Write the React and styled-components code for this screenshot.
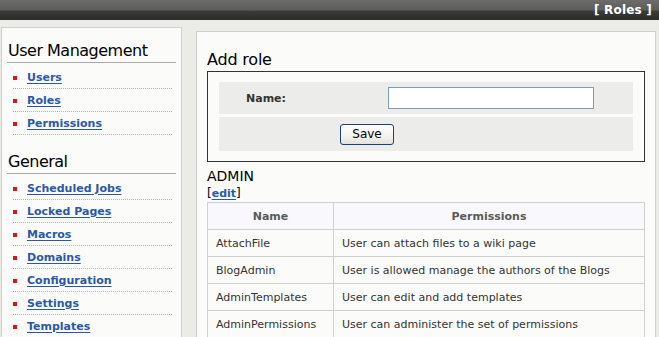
import React from 'react';
import styled, { createGlobalStyle } from 'styled-components';

const GlobalStyle = createGlobalStyle`
  html, body {
    margin: 0;
    padding: 0;
    background: #ebece8;
    font-family: "DejaVu Sans", Verdana, sans-serif;
    overflow: hidden;
  }
  * { box-sizing: border-box; }
`;

const userLinks = ['Users', 'Roles', 'Permissions'];
const generalLinks = [
  'Scheduled Jobs',
  'Locked Pages',
  'Macros',
  'Domains',
  'Configuration',
  'Settings',
  'Templates',
];

const permissions = [
  { name: 'AttachFile', desc: 'User can attach files to a wiki page' },
  { name: 'BlogAdmin', desc: 'User is allowed manage the authors of the Blogs' },
  { name: 'AdminTemplates', desc: 'User can edit and add templates' },
  { name: 'AdminPermissions', desc: 'User can administer the set of permissions' },
];

export default function App() {
  return (
    <>
      <GlobalStyle />
      <TopBar>
        <PageTitle>[ Roles ]</PageTitle>
      </TopBar>
      <Layout>
        <Sidebar>
          <SideHeading>User Management</SideHeading>
          <NavList>
            {userLinks.map((l) => (
              <NavItem key={l}>
                <NavLink href="#">{l}</NavLink>
              </NavItem>
            ))}
          </NavList>
          <SideHeading $spaced>General</SideHeading>
          <NavList>
            {generalLinks.map((l) => (
              <NavItem key={l}>
                <NavLink href="#">{l}</NavLink>
              </NavItem>
            ))}
          </NavList>
        </Sidebar>
        <Main>
          <MainHeading>Add role</MainHeading>
          <FormBox>
            <FormRow>
              <Label>Name:</Label>
              <NameInput type="text" />
            </FormRow>
            <FormRow $button>
              <SaveButton>Save</SaveButton>
            </FormRow>
          </FormBox>
          <RoleTitle>ADMIN</RoleTitle>
          <EditLine>
            [<NavLink href="#">edit</NavLink>]
          </EditLine>
          <Table>
            <thead>
              <tr>
                <Th style={{ width: 126 }}>Name</Th>
                <Th>Permissions</Th>
              </tr>
            </thead>
            <tbody>
              {permissions.map((p) => (
                <tr key={p.name}>
                  <Td>{p.name}</Td>
                  <Td>{p.desc}</Td>
                </tr>
              ))}
            </tbody>
          </Table>
        </Main>
      </Layout>
    </>
  );
}

const TopBar = styled.header`
  height: 20px;
  display: flex;
  justify-content: flex-end;
  align-items: center;
  padding-right: 7px;
  background: linear-gradient(#6c6d6a 0%, #5c5d5a 50%, #3b3b3b 55%, #2b2b2b 100%);
`;

const PageTitle = styled.span`
  color: #fff;
  font-weight: bold;
  font-size: 12px;
  letter-spacing: 0.2px;
`;

const Layout = styled.div`
  display: flex;
  align-items: flex-start;
  gap: 14px;
  height: 317px;
  overflow: hidden;
  padding: 7px 0 0 1px;
`;

const Sidebar = styled.nav`
  width: 181px;
  flex-shrink: 0;
  background: #fbfcf9;
  border: 1px solid #cfd0cc;
  padding: 12px 5px 20px 5px;
  height: 340px;
`;

const SideHeading = styled.h2`
  margin: ${(p) => (p.$spaced ? '16px' : '0')} 0 0 0;
  font-size: 16px;
  letter-spacing: -0.5px;
  font-weight: normal;
  line-height: 21px;
  color: #000;
  border-bottom: 1px solid #a8a8a8;
  padding-left: 1px;
  height: 23px;
`;

const NavList = styled.ul`
  list-style: none;
  margin: 3px 4px 0 6px;
  padding: 0;
`;

const NavItem = styled.li`
  height: 23px;
  border-bottom: 1px dotted #b4b4b4;
  display: flex;
  align-items: center;
  padding-left: 14px;
  position: relative;

  &::before {
    content: '';
    position: absolute;
    left: 0;
    top: 10px;
    width: 4px;
    height: 4px;
    background: #e01212;
  }
`;

const NavLink = styled.a`
  color: #2a58a8;
  font-weight: bold;
  font-size: 11px;
  text-decoration: underline;
  text-underline-offset: 2px;
`;

const Main = styled.main`
  width: 460px;
  height: 320px;
  margin-top: 4px;
  background: #fbfcf9;
  border: 1px solid #cfd0cc;
  padding: 17px 10px 0 10px;
`;

const MainHeading = styled.h2`
  margin: 0 0 1px 0;
  font-size: 16px;
  letter-spacing: -0.2px;
  font-weight: normal;
  line-height: 21px;
  color: #000;
`;

const FormBox = styled.div`
  width: 438px;
  border: 1px solid #333;
  padding: 10px 11px;
  display: flex;
  flex-direction: column;
  gap: 3px;
`;

const FormRow = styled.div`
  background: #ecedea;
  display: grid;
  grid-template-columns: ${(p) => (p.$button ? '121px auto' : '169px 206px')};
  align-items: center;
  height: ${(p) => (p.$button ? '34px' : '32px')};
`;

const Label = styled.label`
  padding-left: 27px;
  font-size: 11px;
  font-weight: bold;
  color: #333;
`;

const NameInput = styled.input`
  width: 206px;
  height: 22px;
  border: 1px solid #7f9db9;
  background: #fff;
  outline: none;
`;

const SaveButton = styled.button`
  grid-column: 2;
  justify-self: start;
  width: 54px;
  height: 21px;
  border: 1px solid #1c3f75;
  border-radius: 3px;
  background: linear-gradient(#ffffff, #f3f2ee 60%, #e2e1da);
  font-family: "DejaVu Sans", Verdana, sans-serif;
  font-size: 12px;
  color: #000;
  padding: 0;
`;

const RoleTitle = styled.h3`
  margin: 6px 0 0 0;
  font-size: 14px;
  font-weight: normal;
  line-height: 17px;
  color: #000;
`;

const EditLine = styled.div`
  font-size: 12px;
  line-height: 16px;
  color: #000;
`;

const Table = styled.table`
  width: 438px;
  border-collapse: collapse;
  font-size: 11px;
  color: #333;
`;

const Th = styled.th`
  height: 27px;
  background: #f9f8fd;
  border: 1px solid #cfcfcf;
  color: #5a5a5a;
  font-weight: bold;
  font-size: 11px;
  text-align: center;
`;

const Td = styled.td`
  height: 27px;
  border: 1px solid #cfcfcf;
  padding: 0 8px;
  text-align: left;
  white-space: nowrap;
`;
